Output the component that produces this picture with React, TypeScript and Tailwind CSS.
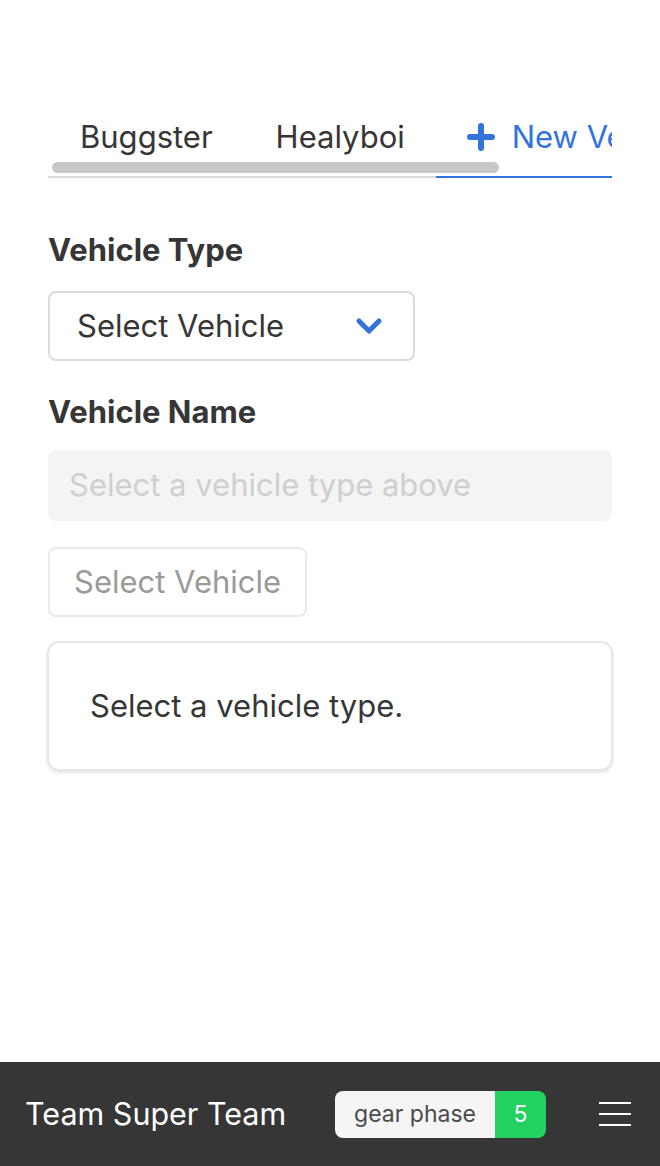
import React from 'react';

const Chevron = () => (
  <svg width="28" height="20" viewBox="0 0 28 20" fill="none">
    <polyline points="4,5 14,15 24,5" stroke="#3273dc" strokeWidth="5" strokeLinecap="round" strokeLinejoin="round" />
  </svg>
);

const Plus = () => (
  <svg width="28" height="28" viewBox="0 0 28 28" fill="none">
    <path d="M14 3v22M3 14h22" stroke="#3273dc" strokeWidth="6" strokeLinecap="round" />
  </svg>
);

export default function App() {
  return (
    <div className="min-h-screen flex flex-col bg-white text-[#363636]" style={{ fontFamily: 'Inter, "Noto Sans", sans-serif' }}>
      <main className="flex-1 px-[48px] pt-[100px]">
        {/* tabs */}
        <div className="relative w-[564px] overflow-hidden">
          <ul className="flex whitespace-nowrap text-[31px] leading-none">
            <li className="pl-[32px] pr-[31px] pt-[21px] pb-[24px] border-b-2 border-[#dbdbdb] shrink-0">Buggster</li>
            <li className="pl-[32px] pr-[31px] pt-[21px] pb-[24px] border-b-2 border-[#dbdbdb] shrink-0">Healyboi</li>
            <li className="px-[31px] pt-[21px] pb-[24px] border-b-2 border-[#3273dc] text-[#3273dc] shrink-0 flex items-center gap-[17px]">
              <Plus />
              <span>New Vehicle</span>
            </li>
          </ul>
          <div className="absolute left-[4px] top-[62px] w-[447px] h-[11px] rounded-full bg-[#c8c8c8]"></div>
        </div>

        {/* vehicle type */}
        <label className="block mt-[56px] text-[31px] font-bold leading-none">Vehicle Type</label>
        <div className="mt-[26px] w-[367px] h-[70px] border-2 border-[#dbdbdb] rounded-[8px] flex items-center justify-between pl-[27px] pr-[30px]">
          <span className="text-[31px] whitespace-nowrap">Select Vehicle</span>
          <Chevron />
        </div>

        {/* vehicle name */}
        <label className="block mt-[35px] text-[31px] font-bold leading-none">Vehicle Name</label>
        <div className="mt-[23px] w-[564px] h-[71px] bg-[#f4f4f4] rounded-[8px] flex items-center px-[21px]">
          <span className="text-[31px] text-[#cfcfcf] whitespace-nowrap">Select a vehicle type above</span>
        </div>

        <div className="mt-[26px] w-fit h-[70px] border-2 border-[#eaeaea] rounded-[8px] flex items-center px-[24px]">
          <span className="text-[31px] text-[#9a9a9a] whitespace-nowrap">Select Vehicle</span>
        </div>

        <div className="mt-[24px] -mx-[1px] h-[130px] border-2 border-[#e6e6e6] rounded-[12px] shadow-[0_2px_3px_rgba(10,10,10,0.1)] flex items-center px-[41px]">
          <span className="text-[31px]">Select a vehicle type.</span>
        </div>
      </main>

      <footer className="h-[104px] bg-[#363636] flex items-center pl-[25px] pr-[29px]">
        <span className="text-white text-[30.5px] whitespace-nowrap">Team Super Team</span>
        <div className="ml-auto flex h-[47px] rounded-[8px] overflow-hidden text-[23px]">
          <span className="bg-[#f5f5f5] text-[#4a4a4a] px-[19px] flex items-center whitespace-nowrap">gear phase</span>
          <span className="bg-[#23d160] text-white w-[51px] flex items-center justify-center">5</span>
        </div>
        <div className="ml-[53px] flex flex-col gap-[9px]">
          <span className="block w-[32px] h-[2px] bg-white"></span>
          <span className="block w-[32px] h-[2px] bg-white"></span>
          <span className="block w-[32px] h-[2px] bg-white"></span>
        </div>
      </footer>
    </div>
  );
}
